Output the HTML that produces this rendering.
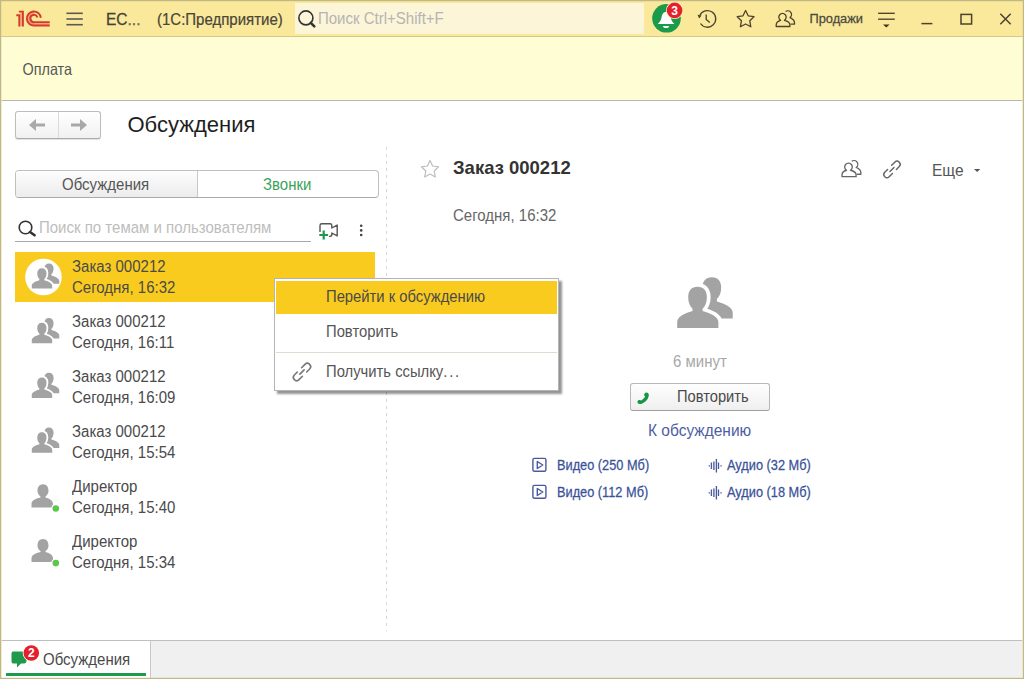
<!DOCTYPE html>
<html><head><meta charset="utf-8">
<style>
*{margin:0;padding:0;box-sizing:border-box}
html,body{width:1024px;height:679px;overflow:hidden;background:#fff;font-family:"Liberation Sans",sans-serif;color:#4d4d4d}
.a{position:absolute}
.t{position:absolute;white-space:nowrap;line-height:1;transform-origin:0 0}
#top{left:0;top:0;width:1024px;height:37px;background:#fae99a;border-bottom:1px solid #d6c987}
#sec{left:0;top:37px;width:1024px;height:64px;background:#fffdd3;border-bottom:1px solid #b6b6b6}
#bot{left:0;top:640px;width:1024px;height:39px;background:#f0f0f0;border-top:1px solid #bfbfbf}
svg.full{position:absolute;left:0;top:0}
</style></head><body>
<div id="top" class="a"></div>
<div id="sec" class="a"></div>
<div id="bot" class="a"></div>

<!-- search box top -->
<div class="a" style="left:295px;top:3px;width:349px;height:31px;background:#fcf5d8"></div>

<!-- nav buttons -->
<div class="a" style="left:15px;top:111px;width:86px;height:28px;border:1px solid #bdbdbd;border-bottom-color:#a9a9a9;border-radius:3px;box-shadow:0 1px 1px rgba(0,0,0,0.12);background:linear-gradient(#ffffff,#f1f1f1)"></div>
<div class="a" style="left:58px;top:112px;width:1px;height:26px;background:#dadada"></div>

<!-- tabs -->
<div class="a" style="left:15px;top:170px;width:364px;height:28px;border:1px solid #c0c0c0;border-bottom-color:#aaa;border-radius:4px;background:#fff"></div>
<div class="a" style="left:16px;top:171px;width:182px;height:26px;border-radius:3px 0 0 3px;background:linear-gradient(#fdfdfd,#ececec);border-right:1px solid #c8c8c8"></div>

<!-- search underline -->
<div class="a" style="left:15px;top:241px;width:296px;height:1px;background:#a8a8a8"></div>

<!-- dashed separator -->
<div class="a" style="left:386px;top:147px;width:1px;height:484px;background:repeating-linear-gradient(#d8d8d8 0 3px,transparent 3px 7px)"></div>

<!-- selected row -->
<div class="a" style="left:15px;top:252px;width:360px;height:50px;background:#facb1f"></div>

<!-- context menu -->
<div class="a" style="left:274px;top:278px;width:285px;height:113px;background:#fff;border:1px solid #b4b4b4;box-shadow:3px 3px 2px rgba(0,0,0,0.42)"></div>
<div class="a" style="left:276px;top:281px;width:281px;height:33px;background:#facb1f"></div>
<div class="a" style="left:276px;top:352px;width:281px;height:1px;background:#dcdcd0"></div>

<!-- repeat button -->
<div class="a" style="left:630px;top:383px;width:140px;height:28px;border:1px solid #b8b8b8;border-bottom-color:#a0a0a0;border-radius:3px;background:linear-gradient(#fefefe,#efefef)"></div>

<!-- bottom tab -->
<div class="a" style="left:1px;top:641px;width:150px;height:37px;background:#fff;border-right:1px solid #c8c8c8"></div>
<div class="a" style="left:6px;top:673px;width:140px;height:2.5px;background:#1f9a4c"></div>

<!-- TEXTS -->
<div class="t" style="left:106px;top:10.67px;font-size:15.5px;color:#454138;transform:scale(1,1.1);-webkit-text-stroke:0.25px #454138;">ЕС<span style='color:#8a8468'>...</span></div>
<div class="t" style="left:157px;top:11.13px;font-size:15px;color:#4a463a;transform:scale(1,1.1);-webkit-text-stroke:0.2px #4a463a;">(1С:Предприятие)</div>
<div class="t" style="left:318px;top:10.49px;font-size:15px;color:#b4b4b4;transform:scale(1,1.04);">Поиск Ctrl+Shift+F</div>
<div class="t" style="left:809.5px;top:12.53px;font-size:12.8px;color:#4a4a40;transform:scale(1,1.04);-webkit-text-stroke:0.25px #4a4a40;">Продажи</div>
<div class="t" style="left:22.5px;top:61.06px;font-size:14.4px;color:#555;transform:scale(1,1.16);">Оплата</div>
<div class="t" style="left:127.5px;top:114.38px;font-size:22px;color:#1e1e1e;transform:scale(1,1.0);">Обсуждения</div>
<div class="t" style="left:62px;top:175.69px;font-size:15px;color:#555;transform:scale(1,1.08);">Обсуждения</div>
<div class="t" style="left:263px;top:175.69px;font-size:15px;color:#3aa35a;transform:scale(1,1.08);">Звонки</div>
<div class="t" style="left:39px;top:219.07px;font-size:15px;color:#bdbdbd;transform:scale(1,1.05);">Поиск по темам и пользователям</div>
<div class="t" style="left:326px;top:289.19px;font-size:14.8px;color:#4a4a4a;transform:scale(1,1.07);">Перейти к обсуждению</div>
<div class="t" style="left:326px;top:324.19px;font-size:14.8px;color:#555;transform:scale(1,1.07);">Повторить</div>
<div class="t" style="left:326px;top:363.99px;font-size:14.8px;color:#555;transform:scale(1,1.07);">Получить ссылку<span style='letter-spacing:1.8px'>...</span></div>
<div class="t" style="left:453px;top:158.31px;font-size:18.5px;color:#333;transform:scale(1,1.04);font-weight:bold;">Заказ 000212</div>
<div class="t" style="left:453px;top:206.59px;font-size:15px;color:#666;transform:scale(1,1.08);">Сегодня, 16:32</div>
<div class="t" style="left:932px;top:161.65px;font-size:15.5px;color:#555;transform:scale(1,1.04);">Еще</div>
<div class="t" style="left:673px;top:352.79px;font-size:15px;color:#a8a8a8;transform:scale(1,1.04);">6 минут</div>
<div class="t" style="left:677px;top:388.91px;font-size:14.7px;color:#4a4a4a;transform:scale(1,1.1);">Повторить</div>
<div class="t" style="left:648px;top:421.85px;font-size:15.5px;color:#4c5ea3;transform:scale(1,1.04);">К обсуждению</div>
<div class="t" style="left:557px;top:457.12px;font-size:14px;color:#3a5299;transform:scale(0.912,1.07);-webkit-text-stroke:0.25px #3a5299;">Видео (250 Мб)</div>
<div class="t" style="left:557px;top:484.12px;font-size:14px;color:#3a5299;transform:scale(0.912,1.07);-webkit-text-stroke:0.25px #3a5299;">Видео (112 Мб)</div>
<div class="t" style="left:727px;top:457.12px;font-size:14px;color:#3a5299;transform:scale(0.912,1.07);-webkit-text-stroke:0.25px #3a5299;">Аудио (32 Мб)</div>
<div class="t" style="left:727px;top:484.12px;font-size:14px;color:#3a5299;transform:scale(0.912,1.07);-webkit-text-stroke:0.25px #3a5299;">Аудио (18 Мб)</div>
<div class="t" style="left:43px;top:651.41px;font-size:15px;color:#4a4a4a;transform:scale(1,1.07);">Обсуждения</div>
<div class="t" style="left:72px;top:258.11px;font-size:15px;color:#4a4a4a;transform:scale(1,1.11);">Заказ 000212</div>
<div class="t" style="left:72px;top:279.01px;font-size:15px;color:#4a4a4a;transform:scale(1,1.11);">Сегодня, 16:32</div>
<div class="t" style="left:72px;top:313.01px;font-size:15px;color:#4a4a4a;transform:scale(1,1.11);">Заказ 000212</div>
<div class="t" style="left:72px;top:333.91px;font-size:15px;color:#4a4a4a;transform:scale(1,1.11);">Сегодня, 16:11</div>
<div class="t" style="left:72px;top:367.91px;font-size:15px;color:#4a4a4a;transform:scale(1,1.11);">Заказ 000212</div>
<div class="t" style="left:72px;top:388.81px;font-size:15px;color:#4a4a4a;transform:scale(1,1.11);">Сегодня, 16:09</div>
<div class="t" style="left:72px;top:422.81px;font-size:15px;color:#4a4a4a;transform:scale(1,1.11);">Заказ 000212</div>
<div class="t" style="left:72px;top:443.71px;font-size:15px;color:#4a4a4a;transform:scale(1,1.11);">Сегодня, 15:54</div>
<div class="t" style="left:72px;top:477.71px;font-size:15px;color:#4a4a4a;transform:scale(1,1.11);">Директор</div>
<div class="t" style="left:72px;top:498.61px;font-size:15px;color:#4a4a4a;transform:scale(1,1.11);">Сегодня, 15:40</div>
<div class="t" style="left:72px;top:532.61px;font-size:15px;color:#4a4a4a;transform:scale(1,1.11);">Директор</div>
<div class="t" style="left:72px;top:553.51px;font-size:15px;color:#4a4a4a;transform:scale(1,1.11);">Сегодня, 15:34</div>
<svg class="full" width="1024" height="679" viewBox="0 0 1024 679">
<defs>
 <path id="grpf" d="M20.55 9.56C26.5 9.56 29.9 13.5 29.9 20C29.9 25.5 28 29 25.6 31.5L25.6 33.8C34 36.5 41.4 39.5 41.4 45L41.4 50.8L0.2 50.8L0.2 45C0.2 39.5 7 36.5 15.5 33.8L15.5 31.5C13.1 29 11.2 25.5 11.2 20C11.2 13.5 14.6 9.56 20.55 9.56Z"/>
 <g id="group">
  <use href="#grpf" fill="#a3a3a3" transform="translate(14.3 -9.6)"/>
  <use href="#grpf" fill="#fff" stroke="#fff" stroke-width="7.5" stroke-linejoin="round"/>
  <use href="#grpf" fill="#a3a3a3"/>
 </g>
 <path id="person" d="M11.5 0C15 0 17 2.8 17 6.5C17 9.5 15.5 11.2 14 12.2L14 13.2C18.5 14.5 21.5 16.5 21.5 19.5L21.5 23.2L0 23.2L0 19.5C0 16.5 3.5 14.5 9 13.2L9 12.2C7.5 11.2 6 9.5 6 6.5C6 2.8 8 0 11.5 0Z"/>
 <g id="link" fill="none" stroke-linecap="round">
  <path d="M2.7 -3.3L7.5 -3.3A3.3 3.3 0 0 1 7.5 3.3L3.3 3.3"/>
  <path d="M-2.7 3.3L-7.5 3.3A3.3 3.3 0 0 1 -7.5 -3.3L-3.3 -3.3"/>
  <path d="M-3 0L3 0"/>
 </g>
</defs>

<!-- 1C logo -->
<g>
 <path d="M34.5 25.5L49.7 25.5L49.7 22L34.5 22A3.7 3.7 0 0 1 34.5 14.8L34.5 11.5A7 7 0 0 0 34.5 25.5Z" fill="#f7a08a"/>
 <rect x="20.3" y="12.5" width="1.6" height="13.9" fill="#f7a08a"/>
 <g fill="none" stroke="#d23d27" stroke-width="1.9">
  <path d="M40.8 17.8A7 7 0 1 0 34.5 25.5L49.7 25.5"/>
  <path d="M37.4 17.6A3.6 3.6 0 1 0 34.5 22.1L49.7 22.1"/>
  <path d="M16.3 15.2L19.3 15.2L19.3 26.4"/>
  <path d="M18.9 11.6L22.9 11.6L22.9 26.4"/>
 </g>
</g>
<!-- hamburger -->
<g stroke="#595959" stroke-width="1.6">
 <line x1="66.4" y1="13.3" x2="82.8" y2="13.3"/>
 <line x1="66.4" y1="19" x2="82.8" y2="19"/>
 <line x1="66.4" y1="24.7" x2="82.8" y2="24.7"/>
</g>
<!-- top search icon -->
<g fill="none" stroke="#333" >
 <circle cx="305.9" cy="17.9" r="7" stroke-width="1.6"/>
 <line x1="310.8" y1="22.8" x2="314.3" y2="26.3" stroke-width="2.6" stroke-linecap="round"/>
</g>
<!-- bell -->
<circle cx="666.5" cy="18.3" r="14.3" fill="#1b9a4b"/>
<path d="M666 12C663 12 662 14.5 661.5 17.5C661 20.5 659.5 22.5 657.8 23.9L674.4 23.9C672.7 22.5 671.2 20.5 670.7 17.5C670.2 14.5 669 12 666 12Z" fill="#fff"/>
<path d="M663 26L669 26A3 2 0 0 1 663 26Z" fill="#fff"/>
<circle cx="674.6" cy="10.4" r="8.6" fill="#fdf1c0"/>
<circle cx="674.6" cy="10.4" r="7.8" fill="#e3202b"/>
<text x="674.6" y="14.6" font-family="Liberation Sans" font-weight="bold" font-size="12" fill="#fff" text-anchor="middle">3</text>
<!-- history -->
<g fill="none" stroke="#4b4330" stroke-width="1.35">
 <path d="M699.8 15.6A8.3 8.3 0 1 1 700.5 23.5"/>
 <path d="M706.2 14.6L706.2 19.4L709.8 22.6"/>
</g>
<path d="M697.5 14.8L701.5 15.5L699.2 18.4Z" fill="#4b4330"/>
<!-- star top -->
<path d="M745.6 10.5L748.2 15.8L754 16.7L749.8 20.8L750.8 26.8L745.6 24L740.4 26.8L741.4 20.8L737.2 16.7L743 15.8Z" fill="none" stroke="#4b4330" stroke-width="1.3" stroke-linejoin="round"/>
<!-- users top -->
<g stroke="#4b4330"><g id="usr" fill="none" stroke-width="1.3" stroke-linejoin="round">
 <path d="M780.6 20.3A3.7 3.7 0 1 1 784.4 20.3C787.5 21 789.9 22.5 789.9 25V26.5H776.2V25C776.2 22.5 778 21 780.6 20.3Z"/>
 <path d="M785.6 11.6A3.6 3.6 0 0 1 790 17.6C792.8 18.8 794.5 20.5 794.5 22.8V24.2H790.6"/>
</g></g>
<!-- filter -->
<g stroke="#4b4330" stroke-width="1.35">
 <line x1="878.1" y1="13.3" x2="894.8" y2="13.3"/>
 <line x1="878.1" y1="19.2" x2="894.8" y2="19.2"/>
</g>
<path d="M883 24.4L889.6 24.4L886.3 27.6Z" fill="#3a3320"/>
<!-- window controls -->
<g stroke="#4b4330" stroke-width="1.5" fill="none">
 <line x1="921.4" y1="23.6" x2="932.4" y2="23.6"/>
 <rect x="961" y="14.4" width="10.6" height="9.6"/>
 <path d="M1000.3 13.8L1010.7 24.2M1010.7 13.8L1000.3 24.2"/>
</g>

<!-- nav arrows -->
<g fill="#a9a9a9">
 <path d="M29 125L36 119L36 123.5L45 123.5L45 126.5L36 126.5L36 131Z"/>
 <path d="M87 125L80 119L80 123.5L71 123.5L71 126.5L80 126.5L80 131Z"/>
</g>

<!-- search icon left -->
<g fill="none" stroke="#333">
 <circle cx="25.5" cy="227.5" r="6.3" stroke-width="1.6"/>
 <line x1="30" y1="232" x2="34.6" y2="235.2" stroke-width="2.6" stroke-linecap="round"/>
</g>
<!-- video add -->
<g fill="none" stroke="#555" stroke-width="1.4" stroke-linejoin="round">
 <path d="M320 232L320 225.5C320 224.5 320.8 223.8 321.8 223.8L330 223.8C331 223.8 331.8 224.5 331.8 225.5L331.8 228L337.2 225.1L337.2 235.9L331.8 233L331.8 234.6C331.8 235.6 331 236.4 330 236.4L329 236.4"/>
</g>
<path d="M323.7 230.5L323.7 239.5M319.3 235L328.1 235" stroke="#1b9a4b" stroke-width="2.2"/>
<g fill="#444">
 <circle cx="361.2" cy="225.7" r="1.3"/>
 <circle cx="361.2" cy="230.4" r="1.3"/>
 <circle cx="361.2" cy="235" r="1.3"/>
</g>

<!-- list icons -->
<circle cx="43.45" cy="277" r="18.3" fill="#fff"/>
<use href="#group" transform="translate(31.7 263.4) scale(0.495)"/>
<use href="#group" transform="translate(31.7 318) scale(0.495)"/>
<use href="#group" transform="translate(31.7 372.8) scale(0.495)"/>
<use href="#group" transform="translate(31.7 427.6) scale(0.495)"/>
<use href="#person" transform="translate(31.5 484.3)" fill="#a3a3a3"/>
<use href="#person" transform="translate(31.5 538.9)" fill="#a3a3a3"/>
<circle cx="55.8" cy="508.5" r="4.6" fill="#fff"/>
<circle cx="55.8" cy="508.5" r="3.3" fill="#5cc84a"/>
<circle cx="55.8" cy="563.1" r="4.6" fill="#fff"/>
<circle cx="55.8" cy="563.1" r="3.3" fill="#5cc84a"/>

<!-- menu link icon -->
<use href="#link" transform="translate(302 372) rotate(-45)" stroke="#777" stroke-width="1.6"/>

<!-- right header -->
<path d="M430 160.5L432.6 166L438.6 166.8L434.2 171L435.3 177L430 174L424.7 177L425.8 171L421.4 166.8L427.4 166Z" fill="none" stroke="#bdbdbd" stroke-width="1.2" stroke-linejoin="round"/>
<use href="#usr" transform="translate(842 161.3) scale(1.03) translate(-776.2 -11.6)" stroke="#666"/>
<use href="#link" transform="translate(892 169.4) rotate(-45) scale(0.95)" stroke="#666" stroke-width="1.5"/>
<path d="M974 169L980.3 169L977.15 172Z" fill="#555"/>

<!-- big group -->
<use href="#group" transform="translate(677 277.2)"/>

<!-- phone -->
<g fill="#179447">
 <path d="M644.8 393.2C646.2 392 648.6 392.6 648.8 394.8C649 398 646 402.6 641 403.9C638.6 404.5 637 403 637.5 401.5C638 400 640.2 399.6 641.3 400.6C643 399.6 644.6 397.8 645.2 396.6C644 395.8 643.8 394.2 644.8 393.2Z"/>
</g>

<!-- video icons -->
<g fill="none" stroke="#4a5a9c" stroke-width="1.4">
 <rect x="532.9" y="458.4" width="13" height="12.9" rx="1.5"/>
 <rect x="532.9" y="485.4" width="13" height="12.9" rx="1.5"/>
 <path d="M537.3 461.5L542.8 465L537.3 468.5Z" stroke-linejoin="round"/>
 <path d="M537.3 488.5L542.8 492L537.3 495.5Z" stroke-linejoin="round"/>
</g>
<!-- audio icons -->
<g stroke="#4a5a9c" stroke-width="1.35">
 <path d="M709.3 465.2V466.4M711.4 462.5V469M713.9 461.5V470M716.4 459V472.5M718.5 462.5V469M721 465.2V466.4"/>
 <path d="M709.3 492.2V493.4M711.4 489.5V496M713.9 488.5V497M716.4 486V499.5M718.5 489.5V496M721 492.2V493.4"/>
</g>

<!-- bottom chat icon -->
<path d="M13 651.5L24 651.5C25.5 651.5 26.5 652.5 26.5 654L26.5 661C26.5 662.5 25.5 663.5 24 663.5L21 663.5L17 667.5L17 663.5L13 663.5C12 663.5 11.5 662.5 11.5 661L11.5 654C11.5 652.5 12 651.5 13 651.5Z" fill="#1f9a4c"/>
<circle cx="31.3" cy="653" r="8.6" fill="#fff"/>
<circle cx="31.3" cy="653" r="7.8" fill="#e3202b"/>
<text x="31.3" y="657.3" font-family="Liberation Sans" font-weight="bold" font-size="12" fill="#fff" text-anchor="middle">2</text>

<!-- window frame -->
<path d="M1.5 37V677M1022.5 37V677" stroke="#fbf6d8" stroke-width="1" opacity="0.7"/>
<rect x="0.6" y="0.6" width="1022.8" height="677.8" fill="none" stroke="#c2b886" stroke-width="1.2"/>
</svg>
</body></html>
